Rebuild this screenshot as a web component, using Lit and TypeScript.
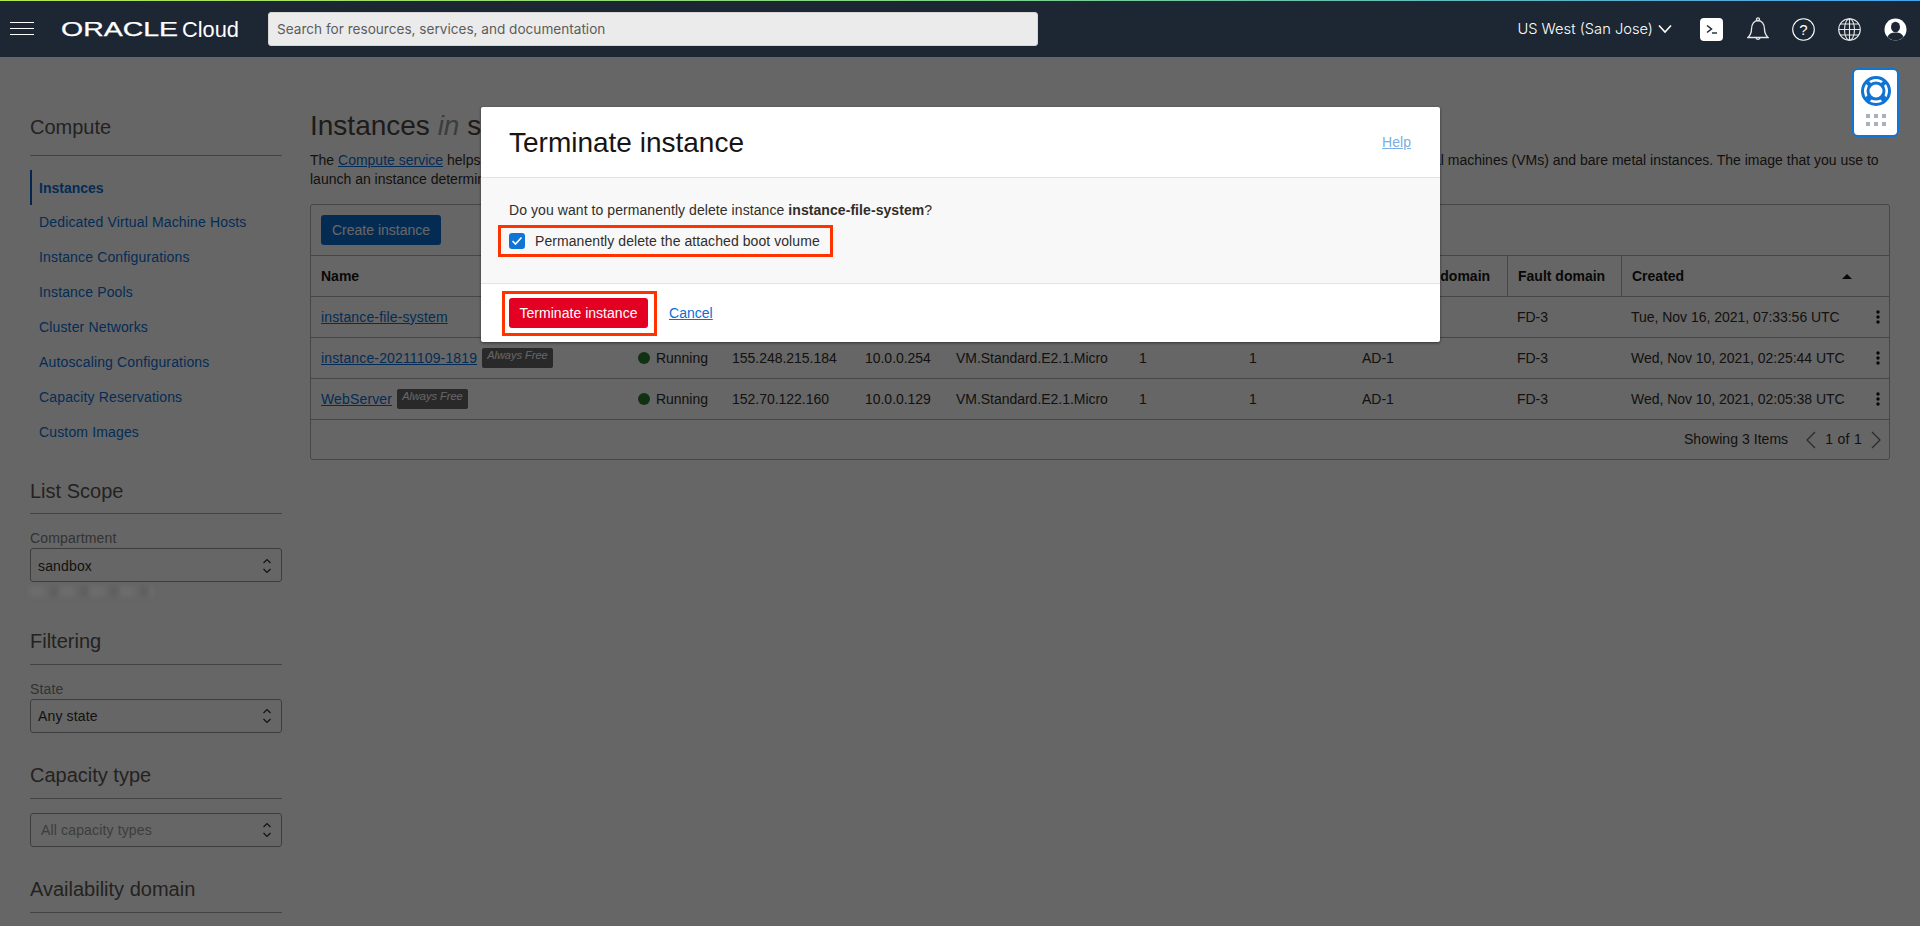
import { LitElement, html, css, svg } from "lit";
import { customElement } from "lit/decorators.js";

interface Instance {
  name: string;
  free: boolean;
  publicIp: string;
  privateIp: string;
  created: string;
}

const INSTANCES: Instance[] = [
  { name: "instance-file-system", free: false, publicIp: "155.248.210.17", privateIp: "10.0.0.87", created: "Tue, Nov 16, 2021, 07:33:56 UTC" },
  { name: "instance-20211109-1819", free: true, publicIp: "155.248.215.184", privateIp: "10.0.0.254", created: "Wed, Nov 10, 2021, 02:25:44 UTC" },
  { name: "WebServer", free: true, publicIp: "152.70.122.160", privateIp: "10.0.0.129", created: "Wed, Nov 10, 2021, 02:05:38 UTC" },
];

const NAV = [
  "Instances",
  "Dedicated Virtual Machine Hosts",
  "Instance Configurations",
  "Instance Pools",
  "Cluster Networks",
  "Autoscaling Configurations",
  "Capacity Reservations",
  "Custom Images",
];

const COLUMNS = ["Name", "State", "Public IP", "Private IP", "Shape", "OCPU count", "Memory (GB)", "Availability domain", "Fault domain", "Created"];

const stepper = html`<svg class="stepper" width="10" height="16" viewBox="0 0 10 16" fill="none" stroke="#312d2a" stroke-width="1.2">
  <path d="M1.5 5 5 1.5 8.5 5M1.5 11 5 14.5 8.5 11" />
</svg>`;

const kebab = html`<svg width="4" height="14" viewBox="0 0 4 14" fill="#161513">
  <circle cx="2" cy="2" r="1.7" /><circle cx="2" cy="7" r="1.7" /><circle cx="2" cy="12" r="1.7" />
</svg>`;

@customElement("app-root")
export default class AppRoot extends LitElement {
  static styles = css`
    :host {
      display: block;
      position: relative;
      height: 929px;
      overflow: hidden;
      background: #fff;
      color: #312d2a;
      font: 14px/19px "Liberation Sans", Arial, sans-serif;
    }
    a {
      color: #0a6fd6;
    }
    .topbar {
      display: flex;
      align-items: center;
      height: 57px;
      box-sizing: border-box;
      padding-top: 1px;
      background: linear-gradient(90deg, #b4e84e, #7fd58a 50%, #45a3ee) top / 100% 1px no-repeat, #1c2733;
      color: #fff;
    }
    .burger {
      display: block;
      margin: 0 0 2px 10px;
    }
    .logo {
      display: block;
      margin-left: 27px;
    }
    .search {
      margin-left: 25px;
      width: 770px;
      height: 34px;
      box-sizing: border-box;
      padding-left: 8px;
      display: flex;
      align-items: center;
      background: #ebebeb;
      border: 1px solid #d6d6d6;
      border-radius: 3px;
      color: #5c5c5c;
      font-family: Inter, "Liberation Sans", sans-serif;
      font-size: 13.6px;
    }
    .tools {
      display: flex;
      align-items: center;
      margin-left: auto;
      padding-right: 13px;
    }
    .region {
      display: flex;
      align-items: center;
      gap: 5px;
      margin-right: 28px;
      font-family: Inter, "Liberation Sans", sans-serif;
      font-size: 14.7px;
      font-weight: 300;
    }
    .tools .ico {
      display: block;
      margin-left: 23px;
    }
    .tools .ico:first-of-type {
      margin-left: 0;
    }
    .tools .bell {
      margin-left: 24px;
    }
    .page {
      display: flex;
      height: 872px;
      overflow: hidden;
    }
    aside {
      flex: 0 0 252px;
      margin-left: 30px;
      padding-top: 58px;
    }
    .side-head {
      font-size: 20px;
      line-height: 24px;
      padding-bottom: 11px;
      border-bottom: 1px solid #a8a8a8;
      color: #5a5654;
    }
    .side-head.first {
      padding-bottom: 16px;
    }
    .side-head.scope {
      padding-bottom: 10px;
    }
    .nav {
      margin: 14px 0 29px;
      letter-spacing: 0.15px;
    }
    .nav div {
      height: 35px;
      line-height: 35px;
      padding-left: 7px;
      color: #0a6fd6;
    }
    .nav .active {
      padding-left: 7px;
      border-left: 2px solid #0a5fc0;
      font-weight: 700;
      line-height: 37px;
      letter-spacing: 0;
    }
    .nav div:not(.active) {
      margin-left: 2px;
    }
    .label {
      margin: 15px 0 1px;
      height: 18px;
      line-height: 18px;
      color: #808080;
      letter-spacing: 0.15px;
    }
    .select {
      display: flex;
      align-items: center;
      justify-content: space-between;
      height: 34px;
      box-sizing: border-box;
      padding: 0 9px 0 7px;
      background: #fff;
      border: 1px solid #999;
      border-radius: 3px;
      letter-spacing: 0.15px;
    }
    .select.low {
      padding-top: 2px;
    }
    .select.empty {
      margin-top: 14px;
      padding-left: 10px;
      color: #999;
    }
    .blurred {
      position: relative;
      z-index: 1;
      margin: 4px 0 32px -1px;
      width: 125px;
      height: 11px;
      background: repeating-linear-gradient(90deg, #6c6c6c 0 14px, #686868 14px 20px, #606060 20px 30px);
      filter: blur(2px);
    }
    .group {
      margin-bottom: 30px;
    }
    section {
      flex: 1;
      margin: 0 30px 0 28px;
      padding-top: 52px;
      min-width: 0;
    }
    h1 {
      margin: 0 0 8px;
      font-size: 28px;
      line-height: 34px;
      font-weight: 400;
      color: #4a4644;
    }
    h1 em {
      color: #999;
    }
    .desc {
      height: 38px;
    }
    .panel {
      margin-top: 15px;
      border: 1px solid #b0b0b0;
      border-radius: 3px;
    }
    .toolbar {
      height: 51px;
      box-sizing: border-box;
      padding: 10px;
      border-bottom: 1px solid #b0b0b0;
    }
    .create {
      width: 120px;
      height: 30px;
      line-height: 30px;
      text-align: center;
      background: #0a6fd0;
      color: #fff;
      border-radius: 3px;
    }
    .row {
      display: grid;
      grid-template-columns: 317px 94px 133px 91px 183px 110px 113px 155px 114px 244px 24px;
      height: 41px;
      box-sizing: border-box;
      align-items: center;
      border-bottom: 1px solid #b0b0b0;
      letter-spacing: -0.03px;
    }
    .cell {
      padding-left: 10px;
      white-space: nowrap;
      display: flex;
      align-items: center;
      height: 100%;
      box-sizing: border-box;
    }
    .cell a {
      letter-spacing: 0.15px;
    }
    .head .cell {
      font-weight: 700;
      letter-spacing: 0;
      color: #161513;
    }
    .head .cell + .cell {
      border-left: 1px solid #b0b0b0;
    }
    .sort {
      margin-left: auto;
      margin-right: 13px;
      width: 0;
      height: 0;
      border: 5px solid transparent;
      border-top: 0;
      border-bottom: 5px solid #161513;
    }
    .cell.menu {
      justify-content: center;
      padding: 0;
      margin-left: 2px;
    }
    .badge {
      margin-left: 5px;
      height: 20px;
      box-sizing: border-box;
      padding: 0 5px;
      background: #666;
      border-radius: 2px;
      color: #fff;
      font-size: 11px;
      line-height: 15px;
      font-style: italic;
      letter-spacing: 0;
    }
    .dot {
      width: 12px;
      height: 12px;
      margin-right: 6px;
      border-radius: 50%;
      background: #2a7a2e;
    }
    .pager {
      display: flex;
      align-items: center;
      justify-content: flex-end;
      height: 39px;
      padding-right: 8px;
      letter-spacing: 0.05px;
    }
    .pager .count {
      margin-right: 18px;
    }
    .pager .pos {
      margin: 0 9px;
      letter-spacing: 0.3px;
    }
    .scrim {
      position: absolute;
      left: 0;
      top: 57px;
      width: 100%;
      height: 869px;
      background: rgba(0, 0, 0, 0.6);
    }
    .modal {
      position: absolute;
      left: 481px;
      top: 50px;
      width: 959px;
      background: #fff;
      border-radius: 2px;
      box-shadow: 0 1px 3px rgba(0, 0, 0, 0.5);
      letter-spacing: 0.03px;
    }
    .modal-head {
      display: flex;
      align-items: center;
      justify-content: space-between;
      height: 71px;
      padding: 1px 29px 0 28px;
      border-bottom: 1px solid #e3e3e3;
      box-sizing: border-box;
    }
    .modal-head h2 {
      margin: 0;
      font-size: 28px;
      font-weight: 400;
      letter-spacing: 0;
      color: #161513;
    }
    .modal-head a {
      color: #7aaee4;
    }
    .modal-body {
      height: 106px;
      box-sizing: border-box;
      padding: 22px 28px 0;
      background: #f8f8f8;
      border-bottom: 1px solid #e3e3e3;
    }
    .question {
      line-height: 20px;
      letter-spacing: 0.07px;
    }
    .mark {
      border: 3px solid #ff3300;
    }
    .check-row {
      display: inline-flex;
      align-items: center;
      height: 32px;
      box-sizing: border-box;
      margin: 5px 0 0 -11px;
      padding: 0 10px 0 8px;
      letter-spacing: 0.07px;
    }
    .check {
      width: 16px;
      height: 16px;
      margin-right: 10px;
      border-radius: 3px;
      background: #0f74d4;
      display: flex;
      align-items: center;
      justify-content: center;
    }
    .modal-foot {
      display: flex;
      align-items: center;
      height: 58px;
      padding-left: 21px;
    }
    .danger-wrap {
      padding: 4px 6px 5px 4px;
    }
    .danger {
      width: 139px;
      height: 30px;
      line-height: 30px;
      text-align: center;
      color: #fff;
      background: #e30022;
      border-radius: 3px;
    }
    .cancel {
      margin-left: 12px;
    }
    .floater {
      position: absolute;
      left: 1852px;
      top: 68px;
      width: 47px;
      height: 69px;
      box-sizing: border-box;
      background: #fff;
      border: 2px solid #0f74d4;
      border-radius: 6px;
      display: flex;
      flex-direction: column;
      align-items: center;
      padding-top: 6px;
    }
    .dots {
      display: grid;
      grid-template-columns: repeat(3, 4px);
      gap: 4px;
      margin-top: 8px;
    }
    .dots i {
      display: block;
      height: 4px;
      background: #a9b1bc;
    }
  `;

  renderTopbar() {
    return html`<header class="topbar">
      <svg class="burger" width="24" height="13" viewBox="0 0 24 13" stroke="#fff" stroke-width="1">
        <path d="M0 .5h24M0 6.500h24M0 12.500h24" />
      </svg>
      <svg class="logo" width="182" height="24" viewBox="0 0 182 24">
        <text x="0" y="19" fill="#fff" stroke="#fff" stroke-width=".25" font-family="Liberation Sans" font-size="19.5" textLength="117" lengthAdjust="spacingAndGlyphs">ORACLE</text>
        <text x="121" y="19.500" fill="#fff" font-family="Liberation Sans" font-size="22" textLength="57" lengthAdjust="spacingAndGlyphs">Cloud</text>
      </svg>
      <div class="search">Search for resources, services, and documentation</div>
      <div class="tools">
        <div class="region">
          US West (San Jose)
          <svg width="14" height="10" viewBox="0 0 14 10" fill="none" stroke="#fff" stroke-width="1.600"><path d="M1 1.500 7 8l6-6.500" /></svg>
        </div>
        <svg class="ico" width="23" height="23" viewBox="0 0 23 23">
          <rect width="23" height="23" rx="4" fill="#fff" />
          <path d="M7 7.500 11.500 11 7 14.500" fill="none" stroke="#1c2733" stroke-width="1.500" />
          <path d="M12 15h5" stroke="#1c2733" stroke-width="1.400" />
        </svg>
        <svg class="ico bell" width="22" height="25" viewBox="0 0 22 25" fill="none" stroke="#e8e8e8" stroke-width="1.300">
          <path d="M1 20.500c2.500-2.500 3.500-4 3.500-8.500 0-5 2.800-8.500 6.500-8.500s6.500 3.500 6.500 8.500c0 4.500 1 6 3.500 8.500z" />
          <circle cx="11" cy="2.300" r="1.500" /><path d="M9 21a2.200 2.200 0 0 0 4 0" />
        </svg>
        <svg class="ico" width="23" height="23" viewBox="0 0 23 23">
          <circle cx="11.500" cy="11.500" r="10.800" fill="none" stroke="#fff" stroke-width="1.100" />
          <text x="11.500" y="16.500" text-anchor="middle" fill="#fff" font-family="Liberation Sans" font-size="15">?</text>
        </svg>
        <svg class="ico" width="23" height="23" viewBox="0 0 23 23" fill="none" stroke="#e8e8e8" stroke-width="1.100">
          <circle cx="11.500" cy="11.500" r="10.800" /><ellipse cx="11.500" cy="11.500" rx="5" ry="10.800" />
          <path d="M11.500.700v21.600M.7 11.500h21.600M2.300 6h18.400M2.300 17h18.400" />
        </svg>
        <svg class="ico" width="23" height="23" viewBox="0 0 23 23">
          <circle cx="11.500" cy="11.500" r="11" fill="#fff" />
          <ellipse cx="11.500" cy="9" rx="4.500" ry="5.200" fill="#1c2733" />
          <path d="M3.500 19c1-3.200 4-4.500 8-4.500s7 1.300 8 4.500a11 11 0 0 1-16 0z" fill="#1c2733" />
        </svg>
      </div>
    </header>`;
  }

  renderSide() {
    return html`<aside>
      <div class="side-head first">Compute</div>
      <div class="nav">
        ${NAV.map((n, i) => html`<div class=${i === 0 ? "active" : ""}>${n}</div>`)}
      </div>
      <div class="side-head scope">List Scope</div>
      <div class="label">Compartment</div>
      <div class="select low">sandbox ${stepper}</div>
      <div class="blurred"></div>
      <div class="side-head">Filtering</div>
      <div class="label">State</div>
      <div class="select group">Any state ${stepper}</div>
      <div class="side-head">Capacity type</div>
      <div class="select empty group">All capacity types ${stepper}</div>
      <div class="side-head">Availability domain</div>
    </aside>`;
  }

  renderTable() {
    return html`<div class="panel">
      <div class="toolbar"><div class="create">Create instance</div></div>
      <div class="row head">
        ${COLUMNS.map((c) => html`<div class="cell">${c}${c === "Created" ? html`<span class="sort"></span>` : ""}</div>`)}
        <div></div>
      </div>
      ${INSTANCES.map(
        (r) => html`<div class="row">
          <div class="cell">
            <a href="#">${r.name}</a>
            ${r.free ? html`<span class="badge">Always Free</span>` : ""}
          </div>
          <div class="cell"><span class="dot"></span>Running</div>
          <div class="cell">${r.publicIp}</div>
          <div class="cell">${r.privateIp}</div>
          <div class="cell">VM.Standard.E2.1.Micro</div>
          <div class="cell">1</div>
          <div class="cell">1</div>
          <div class="cell">AD-1</div>
          <div class="cell">FD-3</div>
          <div class="cell">${r.created}</div>
          <div class="cell menu">${kebab}</div>
        </div>`
      )}
      <div class="pager">
        <span class="count">Showing 3 Items</span>
        <svg width="10" height="18" viewBox="0 0 10 18" fill="none" stroke="#666" stroke-width="1.200"><path d="M9 1 1 9l8 8" /></svg>
        <span class="pos">1 of 1</span>
        <svg width="10" height="18" viewBox="0 0 10 18" fill="none" stroke="#666" stroke-width="1.200"><path d="m1 1 8 8-8 8" /></svg>
      </div>
    </div>`;
  }

  renderModal() {
    return html`<div class="modal">
      <div class="modal-head">
        <h2>Terminate instance</h2>
        <a href="#">Help</a>
      </div>
      <div class="modal-body">
        <div class="question">Do you want to permanently delete instance <b>instance-file-system</b>?</div>
        <div class="check-row mark">
          <span class="check">
            <svg width="12" height="10" viewBox="0 0 12 10" fill="none" stroke="#fff" stroke-width="1.600"><path d="m1.500 5 3 3 6-6.500" /></svg>
          </span>
          Permanently delete the attached boot volume
        </div>
      </div>
      <div class="modal-foot">
        <div class="danger-wrap mark"><div class="danger">Terminate instance</div></div>
        <a class="cancel" href="#">Cancel</a>
      </div>
    </div>`;
  }

  renderRing() {
    return svg`<svg width="30" height="30" viewBox="0 0 30 30" fill="none">
      <circle cx="15" cy="15" r="13.500" stroke="#0f74d4" stroke-width="3" />
      <circle cx="15" cy="15" r="8" stroke="#0f74d4" stroke-width="3" />
      <path d="M5.500 5.500 10 10M24.500 5.500 20 10" stroke="#0f74d4" stroke-width="4" />
      <path d="M5.500 24.500 10 20M24.500 24.500 20 20" stroke="#0f74d4" stroke-width="6" />
    </svg>`;
  }

  render() {
    return html`${this.renderTopbar()}
      <div class="page">
        ${this.renderSide()}
        <section>
          <h1>Instances <em>in</em> sandbox compartment</h1>
          <div class="desc">
            The <a href="#">Compute service</a> helps you provision and manage compute hosts, known as instances. You can make instances as needed to meet your application requirements, including virtual machines (VMs) and bare metal instances. The image that you use to
            launch an instance determines its operating system and other software.
          </div>
          ${this.renderTable()}
        </section>
      </div>
      <div class="scrim">${this.renderModal()}</div>
      <div class="floater">
        ${this.renderRing()}
        <div class="dots">${[0, 1, 2, 3, 4, 5].map(() => html`<i></i>`)}</div>
      </div>`;
  }
}
